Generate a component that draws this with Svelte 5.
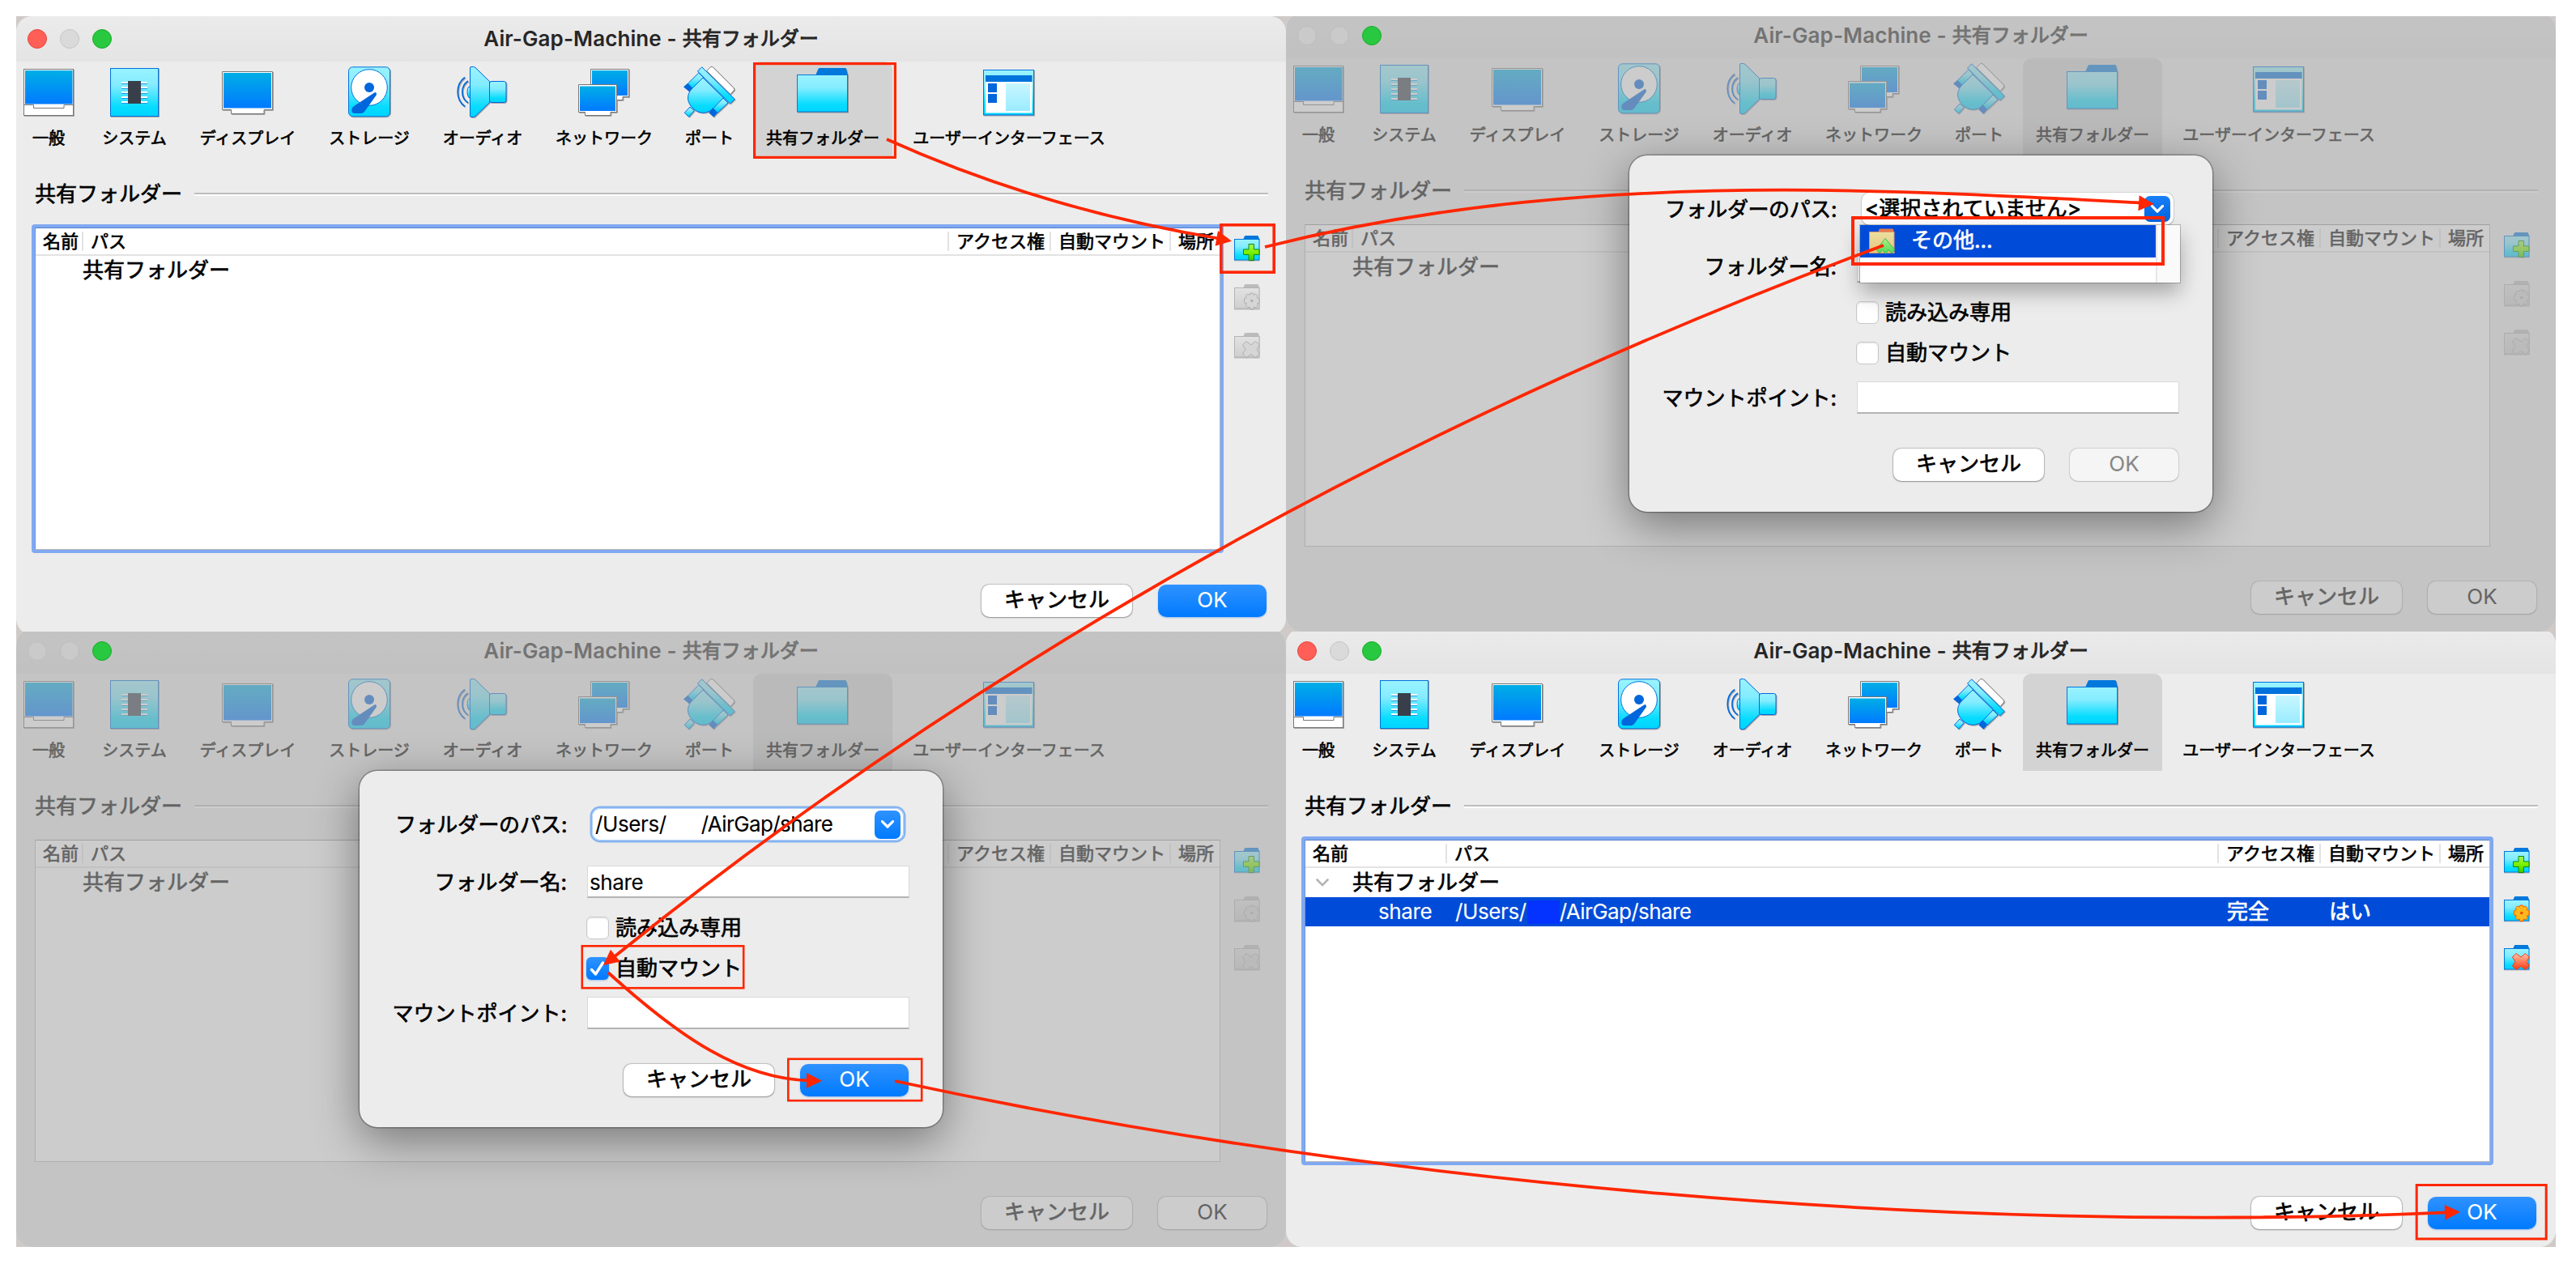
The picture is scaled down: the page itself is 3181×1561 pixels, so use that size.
<script>
  const tools = [
    { id: 'general', label: '一般', width: 80 },
    { id: 'system', label: 'システム', width: 132 },
    { id: 'display', label: 'ディスプレイ', width: 148 },
    { id: 'storage', label: 'ストレージ', width: 152 },
    { id: 'audio', label: 'オーディオ', width: 128 },
    { id: 'network', label: 'ネットワーク', width: 172 },
    { id: 'ports', label: 'ポート', width: 88 },
    { id: 'shared', label: '共有フォルダー', width: 172 },
    { id: 'ui', label: 'ユーザーインターフェース', width: 288 }
  ];

  const panes = [
    { key: 'list', lowered: true, active: true, filled: false, dialog: null },
    { key: 'choose', lowered: false, active: false, filled: false, dialog: 'empty' },
    { key: 'fill', lowered: false, active: false, filled: false, dialog: 'filled' },
    { key: 'done', lowered: false, active: true, filled: true, dialog: null }
  ];

  // Highlight frames: outer x, y, width, height and stroke width
  const frames = [
    [930, 77, 177, 119, 3.2],
    [1506, 276, 69, 62, 3.6],
    [2286, 267, 387, 61, 4],
    [717.5, 1167, 202, 54.5, 2.6],
    [972, 1306.5, 167.5, 54, 2.6],
    [2982.7, 1462, 163, 69.5, 3]
  ];

  // Curves between the steps; each head has its tip and its unit direction
  const arrows = [
    { d: 'M1095 172Q1286 258 1505 294.500', tip: [1521, 297.7], dir: [0.984, 0.178] },
    { d: 'M1562 305C1776 251 1990 235 2204 234.700C2360 235 2500 243 2643 250.500', tip: [2660, 252], dir: [0.998, 0.07] },
    { d: 'M2326 303C1800 498 1260 777 758 1182', tip: [745, 1192], dir: [-0.785, 0.62] },
    { d: 'M751 1201C840 1282 915 1332 999 1334.500', tip: [1015, 1334.7], dir: [1, 0.01] },
    { d: 'M1105 1335C1700 1463 2400 1524 3022 1497.300', tip: [3038, 1496.7], dir: [0.999, -0.036] }
  ];

  function head(tip, dir) {
    const [x, y] = tip;
    const [ux, uy] = dir;
    const bx = x - ux * 19;
    const by = y - uy * 19;
    return `${x},${y} ${bx - uy * 9.5},${by + ux * 9.5} ${bx + uy * 9.5},${by - ux * 9.5}`;
  }
</script>

{#snippet toolIcon(id)}
  <svg class="tool-icon" viewBox="0 0 64 64">
    {#if id === 'general'}
      <rect x="1.5" y="3.5" width="61" height="57" fill="#fff" stroke="#777" />
      <rect x="3" y="5" width="58.5" height="41.5" fill="url(#screen)" />
      <path d="M1.500 47.500H13.500V51.500H51V47.500H62.500" fill="none" stroke="#777" />
    {:else if id === 'system'}
      <rect x="2.500" y="2.500" width="59" height="59" fill="url(#cyan)" stroke="#0072dc" />
      {#each [19, 25, 31, 37, 43] as y}
        <rect x="16" {y} width="32" height="2" fill="#fff" />
        <rect x="16" y={y + 2} width="32" height="1" fill="#1b9ae4" />
      {/each}
      <rect x="24" y="18" width="16" height="28" fill="#383f4b" />
    {:else if id === 'display'}
      <path d="M.5 6.500H62.500V53.500H52V58.500H11.500V53.500H.5Z" fill="#fff" stroke="#777" />
      <rect x="2" y="8" width="59" height="43.500" fill="url(#screen)" />
    {:else if id === 'storage'}
      <rect x="6.500" y=".8" width="51" height="61" rx="5" fill="url(#cyan)" stroke="#0072dc" />
      <circle cx="32" cy="26" r="22.300" fill="#fff" stroke="#0072dc" />
      <circle cx="32" cy="26" r="6" fill="#0066dc" />
      <path d="M38.200 32.500Q41 31 41 35L26 56Q24.500 58 22 58H13Q9.500 57 10.500 52.500Q11 50 14 48.500Z" fill="#0066dc" />
    {:else if id === 'audio'}
      <g stroke="#0068dc" fill="url(#cyan)">
        <path d="M16.500 25H15Q13 26.500 13 31.500T15 38.500H16.500Z" />
        <rect x="40.500" y="18.500" width="20.500" height="26" rx="2.500" />
        <path d="M18 .5H20.500Q22 .5 23 1.500L40.500 18.500V44.500L23 61.500Q22 62.500 20.500 62.500H18Q16.500 62.500 16.500 61V2Q16.500 .5 18 .5Z" />
      </g>
      <path d="M14 18C4.500 24 4.500 39 14 45M10 13.500C-1.700 22 -1.700 41 10 49.500" fill="none" stroke="#0068dc" stroke-width="1.700" />
    {:else if id === 'network'}
      <path d="M15.500 3.500H62.500V37.500H55V41.500H40V37.500H15.500Z" fill="#fff" stroke="#777" />
      <rect x="17" y="5" width="44" height="31" fill="url(#screen)" />
      <path d="M.5 22.500H47.500V56.500H40V60.500H8.500V56.500H.5Z" fill="#fff" stroke="#777" />
      <rect x="2" y="24.500" width="44" height="30.500" fill="url(#screen)" />
    {:else if id === 'ports'}
      <path d="M28.700 5.500L33.500.8Q35 0 36.500 1L62 26.500Q63.500 28.500 62 30L58 34.500Z" fill="#fff" stroke="#777" />
      <g stroke="#0068dc" fill="url(#cyan)" stroke-linejoin="round">
        <path d="M8 50L13.300 54.700L6.700 62.300L1.300 57.300Z" />
        <path d="M18.700 8L25 14L11 28L5.300 21.300Z" />
        <path d="M48.500 38.500L55 45L42 57.300L36 51.300Z" />
        <path d="M24 14L49.300 38.700L37 51.500C30 59 19 59 12 52C4 45 3.500 35 10 28Z" />
        <path d="M22.700.8L17.500 6L57.500 46L63.300 40.500Z" />
      </g>
      <path d="M5.300 20.700L11.300 26.700L7.300 31.300L0 25.300ZM36 51.300L42 57.300L37.300 62.700L31.300 57.300Z" fill="#0066dc" />
    {:else if id === 'shared'}
      <path d="M23 11L26.500 3Q27 2 28 2H59.500Q60.500 2 61 3L63 11Z" fill="#0078dc" />
      <rect x=".5" y="10.500" width="62" height="45.500" fill="url(#cyan)" stroke="#0078dc" />
    {:else}
      <rect x=".5" y="4.500" width="62" height="55.500" fill="url(#cyan)" stroke="#0072dc" />
      <rect x="3" y="11" width="57.500" height="8" fill="#0072dc" />
      <rect x="3" y="19" width="57.500" height="38.500" fill="#fff" />
      <path d="M6 21H17V32H6ZM6 34H17V45H6Z" fill="#0066dc" />
      <rect x="28" y="21" width="30" height="34" fill="url(#pale)" />
    {/if}
  </svg>
{/snippet}

{#snippet folderIcon(badge, enabled)}
  <svg class="folder-icon" viewBox="0 0 32 32">
    <path d="M11 6L13 1.600Q13.300 1 14 1H29.500L31.500 6Z" fill={enabled ? '#0078dc' : '#bcbcbc'} />
    <rect x=".5" y="5.500" width="30.500" height="25.500" fill={enabled ? 'url(#cyan)' : 'url(#grey)'} stroke={enabled ? '#0078dc' : '#b4b4b4'} />
    {#if badge === 'plus'}
      <path d="M18 11.500H24.500V18H31V24.500H24.500V31.500H18V24.500H11.500V18H18Z" fill="url(#green)" stroke="#0c8a0c" />
    {:else if badge === 'gear'}
      <g fill={enabled ? '#ffb81c' : '#d6d6d6'} stroke={enabled ? '#f06000' : '#b0b0b0'}>
        <path d="M20 12H23.500L24.200 14.300L26.600 13L29.200 15.500L28.200 17.800L31 18.700V24L28.400 24.800L29.300 27.500L26.800 30L24.400 29L23.500 31.500H20L19.200 29L16.700 30L14.300 27.500L15.300 24.800L12.500 24V18.700L15.200 17.800L14.300 15.300L16.700 13L19.200 14.200Z" />
        <circle cx="21.800" cy="21.500" r="1.800" fill={enabled ? '#e84800' : '#b0b0b0'} stroke="none" />
      </g>
    {:else}
      <path d="M15 11.500L21 16L26.500 11.500L31.300 16L28 21.500L31.300 27L26.500 31.500L21 27.500L15 31.500L10.500 27L14 21.500L10.500 16Z" fill={enabled ? 'url(#red)' : '#d6d6d6'} stroke={enabled ? '#f03c14' : '#b0b0b0'} />
    {/if}
  </svg>
{/snippet}

{#snippet chevron()}
  <svg class="chevron" viewBox="0 0 16 10"><path d="M1.500 1.500L8 8.200L14.500 1.500" /></svg>
{/snippet}

{#snippet dialog(kind)}
  {@const filled = kind === 'filled'}
  <div class="dialog">
    <div class="field-row">
      <div class="caption tight">フォルダーのパス:</div>
      <div class="combo" class:focus={filled}>
        <div class="combo-text">
          {#if filled}
            <span class="users">/Users/</span><span class="gap"></span><span class="path-tail">/AirGap/share</span>
          {:else}
            <span class="none">&lt;選択されていません&gt;</span>
          {/if}
        </div>
        <div class="combo-button">{@render chevron()}</div>
      </div>
    </div>
    <div class="field-row name-row">
      <div class="caption">フォルダー名:</div>
      <div class="input">{#if filled}<span class="share">share</span>{/if}</div>
    </div>
    <div class="check-row">
      <div class="check"></div>
      <div class="check-label">読み込み専用</div>
    </div>
    <div class="check-row second">
      <div class="check" class:checked={filled}>
        {#if filled}
          <svg viewBox="0 0 28 28"><path d="M6.500 15.500L11.500 21L20.500 7" /></svg>
        {/if}
      </div>
      <div class="check-label">自動マウント</div>
    </div>
    <div class="field-row mount-row">
      <div class="caption">マウントポイント:</div>
      <div class="input"></div>
    </div>
    <div class="dialog-actions">
      <div class="button wide"><span class="jp">キャンセル</span></div>
      <div class="button" class:primary={filled} class:disabled={!filled}><span class="ok">OK</span></div>
    </div>
    {#if !filled}
      <div class="popup">
        <div class="option">
          <svg viewBox="0 0 32 32">
            <path d="M11 5L13 .5H29.500L31 5Z" fill="#e67a50" />
            <rect x=".5" y="4.500" width="30.500" height="26" fill="url(#sand)" stroke="#e0946a" />
            <path d="M20 12.500L31.500 26L28 31L24 26.500L20.500 31.500L16.500 26.500L13 31L9 26Z" fill="url(#leaf)" stroke="#3fb950" />
          </svg>
          <span>その他...</span>
        </div>
        <div class="track"></div>
      </div>
    {/if}
  </div>
{/snippet}

<svg class="defs" width="0" height="0">
  <defs>
    <linearGradient id="screen" x1="0" y1="0" x2="0" y2="1"><stop offset="0" stop-color="#00aee6" /><stop offset="1" stop-color="#007aff" /></linearGradient>
    <linearGradient id="cyan" x1="0" y1="0" x2="0" y2="1"><stop offset="0" stop-color="#9af3ff" /><stop offset=".35" stop-color="#84ecff" /><stop offset=".8" stop-color="#06dcff" /><stop offset="1" stop-color="#00d4ff" /></linearGradient>
    <linearGradient id="pale" x1="0" y1="0" x2="0" y2="1"><stop offset="0" stop-color="#c8f6ff" /><stop offset="1" stop-color="#9aecff" /></linearGradient>
    <linearGradient id="grey" x1="0" y1="0" x2="0" y2="1"><stop offset="0" stop-color="#e2e2e2" /><stop offset="1" stop-color="#cfcfcf" /></linearGradient>
    <linearGradient id="green" x1="0" y1="0" x2="0" y2="1"><stop offset="0" stop-color="#a4f55a" /><stop offset=".5" stop-color="#7cf000" /><stop offset="1" stop-color="#3cc800" /></linearGradient>
    <linearGradient id="red" x1="0" y1="0" x2="0" y2="1"><stop offset="0" stop-color="#ffc4a8" /><stop offset="1" stop-color="#ff3a14" /></linearGradient>
    <linearGradient id="sand" x1="0" y1="0" x2="0" y2="1"><stop offset="0" stop-color="#ecdfa0" /><stop offset="1" stop-color="#e8c47c" /></linearGradient>
    <linearGradient id="leaf" x1="0" y1="0" x2="0" y2="1"><stop offset="0" stop-color="#b4f080" /><stop offset="1" stop-color="#48d858" /></linearGradient>
  </defs>
</svg>

<main class="board">
  {#each panes as pane (pane.key)}
    <section class="pane">
      <div class="window" class:lowered={pane.lowered} class:dimmed={!pane.active}>
        <header class="titlebar">
          <div class="lights"><i class="close"></i><i class="minimise"></i><i class="zoom"></i></div>
          <div class="title"><span class="title-latin">Air-Gap-Machine -</span> <span class="title-jp">共有フォルダー</span></div>
          <div></div>
        </header>
        <nav class="toolbar">
          {#each tools as tool (tool.id)}
            <div class="tool {tool.id}" class:selected={tool.id === 'shared'} style:width="{tool.width}px">
              {@render toolIcon(tool.id)}
              <div class="tool-label">{tool.label}</div>
            </div>
          {/each}
        </nav>
        <div class="group"><span>共有フォルダー</span><i class="rule"></i></div>
        <div class="content">
          <div class="ring" class:focus={pane.active}>
            <div class="table" class:filled={pane.filled}>
              <div class="columns">
                <div>名前</div><div>パス</div><div>アクセス権</div><div>自動マウント</div><div>場所</div>
              </div>
              <div class="line root">
                <div class="disclosure">{#if pane.filled}{@render chevron()}{/if}</div>
                <div>共有フォルダー</div>
              </div>
              {#if pane.filled}
                <div class="line entry">
                  <div class="entry-name"><span class="share">share</span></div>
                  <div class="entry-path"><span class="users">/Users/</span><span class="redacted"></span><span class="path-tail">/AirGap/share</span></div>
                  <div>完全</div>
                  <div>はい</div>
                </div>
              {/if}
            </div>
          </div>
          <div class="side">
            {@render folderIcon('plus', true)}
            {@render folderIcon('gear', pane.filled)}
            {@render folderIcon('cross', pane.filled)}
          </div>
        </div>
        <footer class="actions">
          <div class="button wide"><span class="jp">キャンセル</span></div>
          <div class="button" class:primary={pane.active}><span class="ok">OK</span></div>
        </footer>
        {#if pane.dialog}{@render dialog(pane.dialog)}{/if}
      </div>
    </section>
  {/each}

  <svg class="marks" viewBox="0 0 3181 1561">
    {#each frames as [x, y, w, h, s]}
      <rect x={x + s / 2} y={y + s / 2} width={w - s} height={h - s} stroke-width={s} />
    {/each}
    {#each arrows as arrow}
      <path d={arrow.d} />
      <polygon points={head(arrow.tip, arrow.dir)} />
    {/each}
  </svg>
</main>

<style>
  :global(body) {
    background: #fff;
    overflow: hidden;
  }
  .defs {
    position: absolute;
  }
  .board {
    position: relative;
    box-sizing: border-box;
    width: 3181px;
    height: 1561px;
    padding: 20px;
    display: grid;
    grid-template-columns: 1568px 1568px;
    grid-template-rows: 760px 760px;
    font-family: Inter, 'Noto Sans CJK JP', sans-serif;
    font-size: 26px;
    line-height: 40px;
    color: #000;
    white-space: nowrap;
    -webkit-text-stroke: 0.7px currentColor;
  }
  .pane {
    overflow: hidden;
    background: #cfcac7;
  }
  .window {
    position: relative;
    height: 764px;
    margin-top: -4px;
    border-radius: 20px;
    background: #ececec;
    display: flex;
    flex-direction: column;
    overflow: hidden;
  }
  .window.lowered {
    margin-top: 0;
  }
  .window.dimmed::after {
    content: '';
    position: absolute;
    inset: 0;
    background: rgba(169, 169, 169, 0.592);
  }

  .titlebar {
    height: 56px;
    display: grid;
    grid-template-columns: 1fr auto 1fr;
    align-items: center;
    background: linear-gradient(#ebebeb, #e4e4e4);
  }
  .lights {
    display: flex;
    gap: 16px;
    padding-left: 14px;
  }
  .lights i {
    box-sizing: border-box;
    width: 24px;
    height: 24px;
    border-radius: 50%;
    border: 1px solid #c4c4c4;
    background: #dadada;
  }
  .lights .close {
    background: #ff5f57;
    border-color: #e2463f;
  }
  .lights .zoom {
    background: #28c840;
    border-color: #1aab29;
    position: relative;
    z-index: 2;
  }
  .dimmed .lights .close,
  .dimmed .lights .minimise {
    background: #fafafa;
    border-color: #d8d8d8;
  }
  .title {
    color: #262626;
    display: flex;
    gap: 7px;
    line-height: 40px;
    margin-top: -1px;
  }
  .title-latin {
    font-weight: 600;
    -webkit-text-stroke: 0;
    letter-spacing: 0.1px;
  }
  .title-jp {
    font-size: 24px;
    -webkit-text-stroke: 1px currentColor;
  }

  .toolbar {
    display: flex;
    height: 120px;
  }
  .tool {
    display: flex;
    flex-direction: column;
    align-items: center;
    padding-top: 6px;
    box-sizing: border-box;
  }
  .tool.selected {
    margin-left: 10px;
    background: #d3d3d3;
    border-radius: 10px 10px 0 0;
  }
  .tool-icon {
    width: 64px;
    height: 64px;
    overflow: visible;
    filter: drop-shadow(1px 1.5px 0.5px rgba(0, 0, 0, 0.3));
  }
  .tool-label {
    margin-top: 13px;
    font-size: 20px;
    line-height: 24px;
  }

  .group {
    display: flex;
    align-items: center;
    margin-top: 24px;
    padding: 0 22px 0 23px;
    height: 40px;
  }
  .rule {
    flex: 1;
    height: 2px;
    margin-left: 15px;
    background: #bdbdbd;
    border-bottom: 2px solid #fff;
  }

  .content {
    display: flex;
    margin-top: 17px;
    padding-left: 19px;
  }
  .ring {
    box-sizing: border-box;
    width: 1472px;
    height: 406px;
    border: 4px solid transparent;
    border-radius: 4px;
  }
  .ring.focus {
    border-color: #80a9f2;
  }
  .table {
    box-sizing: border-box;
    height: 100%;
    background: #fff;
    border: 1px solid #b8b8b8;
    border-top-color: #909090;
  }
  .ring.focus .table {
    border-top-color: #5680cc;
    border-left-color: #6c94dc;
  }
  .columns,
  .entry {
    display: grid;
    grid-template-columns: 59px 1fr 126px 148px 60px;
  }
  .filled .columns,
  .filled .entry {
    grid-template-columns: 175px 1fr 126px 148px 60px;
  }
  .columns {
    height: 32px;
    border-bottom: 2px solid #e3e3e3;
    font-size: 22px;
    line-height: 24px;
    align-items: center;
  }
  .columns div {
    padding-left: 9px;
    border-right: 2px solid #e3e3e3;
  }
  .columns div:last-child {
    border-right: 0;
  }
  .line {
    height: 36px;
    line-height: 36px;
  }
  .root {
    display: flex;
  }
  .disclosure {
    width: 58px;
    box-sizing: border-box;
    padding-left: 13px;
    display: flex;
    align-items: center;
  }
  .chevron {
    width: 16px;
    height: 10px;
    fill: none;
    stroke: #b4b4b4;
    stroke-width: 2.6;
    stroke-linecap: round;
    stroke-linejoin: round;
  }
  .entry {
    background: #004cd9;
    color: #fff;
  }
  .entry div {
    padding-left: 10px;
  }
  .entry .entry-name {
    padding-left: 90px;
  }
  .entry-path {
    display: flex;
    align-items: center;
  }
  .redacted {
    width: 40px;
    height: 29px;
    margin: 0 0 0 1px;
    background: #0432ff;
  }
  .users,
  .path-tail,
  .share,
  .ok {
    -webkit-text-stroke: 0.1px currentColor;
    display: inline-block;
  }
  .users,
  .share {
    letter-spacing: -0.4px;
  }
  .path-tail {
    letter-spacing: -0.6px;
  }
  .side {
    display: flex;
    flex-direction: column;
    gap: 28px;
    padding: 13px 0 0 13px;
  }
  .folder-icon {
    width: 32px;
    height: 32px;
    overflow: visible;
    filter: drop-shadow(0.5px 1px 0.5px rgba(0, 0, 0, 0.2));
  }

  .actions {
    display: flex;
    justify-content: flex-end;
    gap: 32px;
    margin-top: 39px;
    padding-right: 24px;
  }
  .button {
    box-sizing: border-box;
    width: 134px;
    height: 40px;
    border-radius: 10px;
    background: #fff;
    box-shadow: 0 0 1px 0.5px rgba(0, 0, 0, 0.18), 0 1px 2px rgba(0, 0, 0, 0.25);
    text-align: center;
    line-height: 38px;
  }
  .button.wide {
    width: 186px;
  }
  .button.primary {
    background: linear-gradient(#2f92ff, #007aff);
    color: #fff;
    box-shadow: 0 1px 2px rgba(0, 90, 220, 0.35);
  }
  .button.disabled {
    background: #f5f5f5;
    color: #888;
    box-shadow: 0 0 1px 0.5px rgba(0, 0, 0, 0.12), 0 1px 1px rgba(0, 0, 0, 0.1);
  }

  .dialog {
    position: absolute;
    z-index: 3;
    left: 424px;
    top: 176px;
    width: 720px;
    height: 440px;
    box-sizing: border-box;
    padding-top: 46px;
    border-radius: 22px;
    background: #ececec;
    box-shadow: 0 0 0 1.500px rgba(0, 0, 0, 0.28), 0 16px 56px rgba(0, 0, 0, 0.42);
  }
  .field-row {
    display: flex;
    height: 40px;
    line-height: 42px;
  }
  .caption {
    width: 256px;
    text-align: right;
  }
  .caption.tight {
    letter-spacing: -0.4px;
  }
  .combo {
    box-sizing: border-box;
    width: 385px;
    margin-left: 31px;
    border-radius: 10px;
    background: #fff;
    display: flex;
    align-items: center;
    justify-content: space-between;
    padding: 0 4px 0 4px;
    box-shadow: 0 0 1px 1px rgba(0, 0, 0, 0.1), 0 1px 1.500px rgba(0, 0, 0, 0.2);
  }
  .combo.focus {
    box-shadow: inset 0 0 0 1px #b4d2fb, 0 0 0 2.500px #86b4f0;
  }
  .combo-text {
    display: flex;
    align-items: center;
  }
  .gap {
    width: 43px;
  }
  .combo-button {
    width: 32px;
    height: 32px;
    border-radius: 7px;
    background: linear-gradient(#1a80f6, #0062e0);
    display: flex;
    align-items: center;
    justify-content: center;
  }
  .focus .combo-button {
    background: linear-gradient(#2f92ff, #007aff);
    height: 35px;
  }
  .combo-button .chevron {
    stroke: #fff;
    stroke-width: 3.2;
  }
  .name-row {
    margin-top: 31px;
  }
  .input {
    box-sizing: border-box;
    width: 398px;
    margin-left: 25px;
    background: #fff;
    border: 1px solid #d9d9d9;
    border-bottom: 2px solid #b4b4b4;
    padding-left: 2px;
    line-height: 40px;
  }
  .check-row {
    display: flex;
    align-items: center;
    height: 28px;
    margin-top: 23px;
    padding-left: 280px;
  }
  .check-row.second {
    margin-top: 22px;
  }
  .check {
    box-sizing: border-box;
    width: 28px;
    height: 28px;
    border-radius: 6px;
    background: #fff;
    border: 1px solid #c8c8c8;
    box-shadow: inset 0 1px 2px rgba(0, 0, 0, 0.12);
  }
  .check.checked {
    border: 0;
    background: linear-gradient(#2f92ff, #007aff);
    box-shadow: 0 1px 2px rgba(0, 90, 220, 0.35);
  }
  .check svg {
    display: block;
    fill: none;
    stroke: #fff;
    stroke-width: 3.4;
    stroke-linecap: round;
    stroke-linejoin: round;
  }
  .check-label {
    margin-left: 8px;
  }
  .mount-row {
    margin-top: 21px;
  }
  .dialog-actions {
    display: flex;
    gap: 32px;
    margin-top: 43px;
    padding-left: 326px;
  }
  .popup {
    position: absolute;
    left: 285px;
    top: 86px;
    width: 395px;
    height: 71px;
    display: flex;
    background: #fff;
    box-shadow: 0 0 0 1px rgba(0, 0, 0, 0.22), 0 12px 26px rgba(0, 0, 0, 0.3);
  }
  .option {
    width: 365px;
    height: 40px;
    background: #004cd9;
    color: #fff;
    display: flex;
    align-items: center;
    line-height: 36px;
  }
  .option svg {
    width: 32px;
    height: 32px;
    margin-left: 11px;
    overflow: visible;
  }
  .option span {
    margin-left: 20px;
    margin-top: -3px;
  }
  .track {
    flex: 1;
    background: #fafafa;
    border-left: 2px solid #e6e6e6;
  }

  .marks {
    position: absolute;
    left: 0;
    top: 0;
    width: 3181px;
    height: 1561px;
    z-index: 5;
    fill: none;
    stroke: #ff2600;
  }
  .marks path {
    stroke-width: 3.8;
  }
  .marks polygon {
    fill: #ff2600;
    stroke: none;
  }
</style>
